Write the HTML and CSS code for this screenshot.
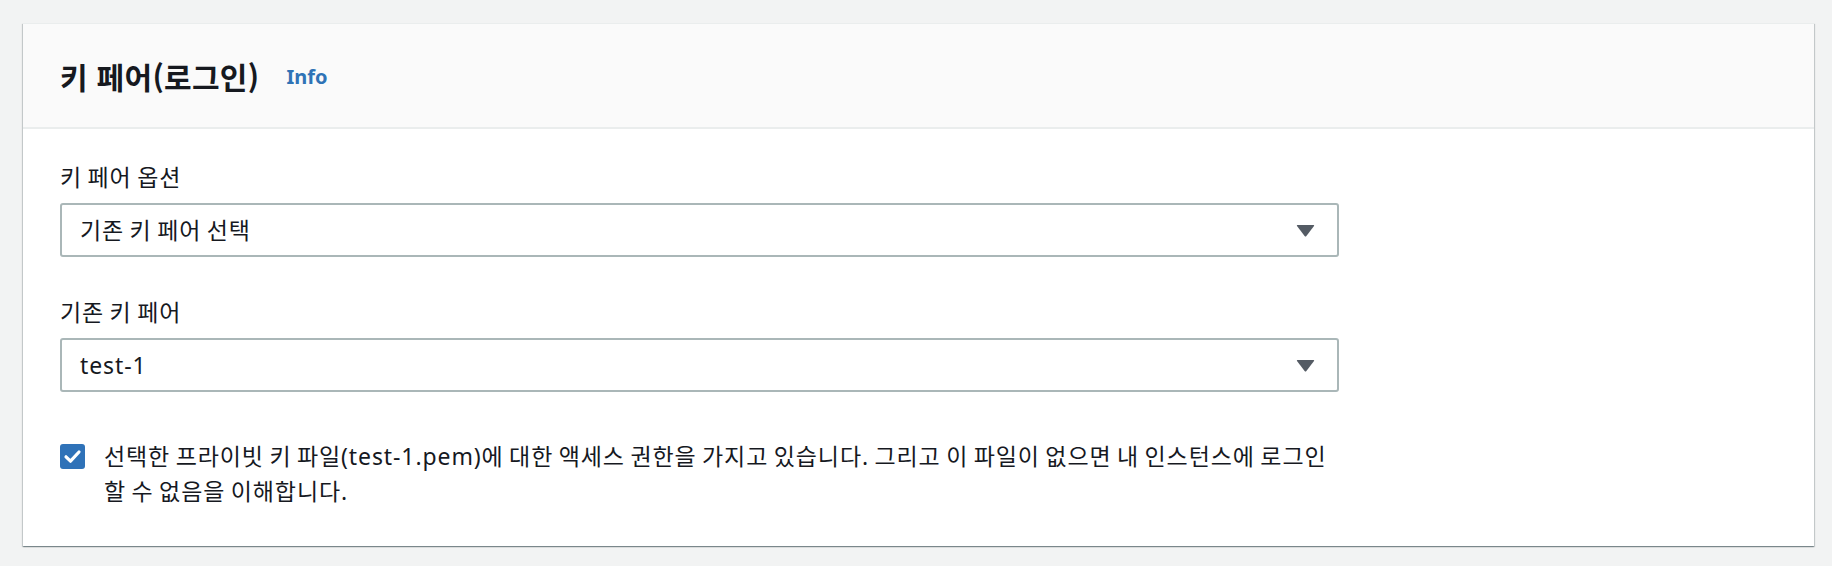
FILE: index.html
```html
<!DOCTYPE html>
<html lang="ko">
<head>
<meta charset="utf-8">
<title>키 페어(로그인)</title>
<link rel="stylesheet" href="styles.css">
</head>
<body>
<section class="card">
  <header class="card-header">
    <h2 class="card-title">키 페어(로그인)</h2>
    <a class="info-link" href="#">Info</a>
  </header>
  <div class="card-body">
    <div class="field">
      <label class="field-label">키 페어 옵션</label>
      <div class="select">
        <span class="select-value">기존 키 페어 선택</span>
        <svg class="caret" width="19" height="13" viewBox="0 0 19 13"><path d="M1.5 1 H17.5 Q18.6 1 18 2 L10.4 12 Q9.5 13 8.6 12 L1 2 Q0.4 1 1.5 1 Z" fill="#545b64"/></svg>
      </div>
    </div>
    <div class="field field-second">
      <label class="field-label">기존 키 페어</label>
      <div class="select">
        <span class="select-value">test-1</span>
        <svg class="caret" width="19" height="13" viewBox="0 0 19 13"><path d="M1.5 1 H17.5 Q18.6 1 18 2 L10.4 12 Q9.5 13 8.6 12 L1 2 Q0.4 1 1.5 1 Z" fill="#545b64"/></svg>
      </div>
    </div>
    <div class="check-row">
      <svg class="checkbox" width="25" height="25" viewBox="0 0 25 25"><rect x="0" y="0" width="25" height="25" rx="3" fill="#2f72b8"/><path d="M6 12.8 L10.5 17.2 L19 8" fill="none" stroke="#fff" stroke-width="3.2" stroke-linecap="round" stroke-linejoin="round"/></svg>
      <p class="check-text">선택한 프라이빗 키 파일(test-1.pem)에 대한 액세스 권한을 가지고 있습니다. 그리고 이 파일이 없으면 내 인스턴스에 로그인 할 수 없음을 이해합니다.</p>
    </div>
  </div>
</section>
</body>
</html>
```

FILE: styles.css
```css
html, body {
  margin: 0;
  padding: 0;
}
body {
  background: #f2f3f3;
  padding: 23px 18px 20px 23px;
  font-family: "Noto Sans", "Noto Sans CJK KR", sans-serif;
  color: #16191f;
}
.card {
  background: #ffffff;
  border-top: 1px solid #eaeded;
  box-shadow: 0 1px 1px 0 rgba(0, 28, 36, 0.3), 1px 1px 1px 0 rgba(0, 28, 36, 0.15), -1px 1px 1px 0 rgba(0, 28, 36, 0.15);
}
.card-header {
  background: #fafafa;
  border-bottom: 2px solid #eaeded;
  height: 105px;
  box-sizing: border-box;
  display: flex;
  align-items: center;
  padding: 0 37px;
}
.card-title {
  margin: 0;
  font-size: 30px;
  font-weight: 700;
  line-height: 36px;
  letter-spacing: 0.3px;
  font-family: "Noto Sans CJK KR", sans-serif;
}
.info-link {
  margin-left: 27px;
  font-size: 20px;
  font-weight: 700;
  color: #2f73b6;
  text-decoration: none;
  line-height: 34px;
  margin-top: 2px;
}
.card-body {
  padding: 31px 37px 37px;
}
.field-label {
  display: block;
  font-size: 23px;
  line-height: 34px;
  letter-spacing: 0.9px;
  word-spacing: -1.4px;
  margin-bottom: 9px;
}
.field-second {
  margin-top: 38px;
}
.select {
  width: 1279px;
  height: 54px;
  box-sizing: border-box;
  border: 2px solid #aab7b8;
  border-radius: 3px;
  display: flex;
  align-items: center;
  justify-content: space-between;
  padding: 0 22px 0 18px;
}
.select-value {
  font-size: 23px;
  line-height: 34px;
  letter-spacing: 0.9px;
  word-spacing: -1.4px;
}
.caret {
  display: block;
}
.check-row {
  margin-top: 47px;
  display: flex;
  align-items: flex-start;
  width: 1279px;
}
.checkbox {
  flex: none;
  margin-top: 5px;
  margin-right: 19px;
}
.check-text {
  flex: 1;
  margin: 0;
  font-size: 23px;
  line-height: 35px;
  letter-spacing: 0.9px;
  word-spacing: -1.4px;
  word-break: keep-all;
}
```
